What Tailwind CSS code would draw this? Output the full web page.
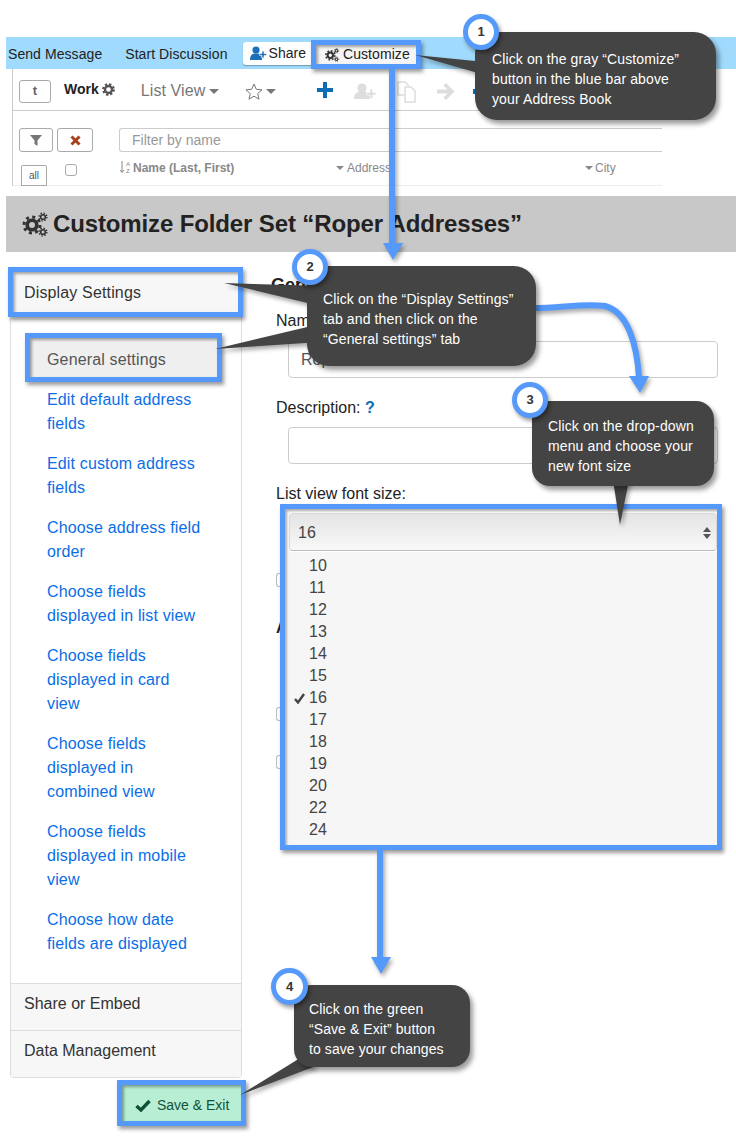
<!DOCTYPE html>
<html lang="en">
<head>
  <meta charset="UTF-8" />
  <meta name="viewport" content="width=device-width, initial-scale=1.0" />
  <title>Customize Folder Set</title>
  <script src="https://cdn.jsdelivr.net/npm/@tailwindcss/browser@4"></script>
</head>
<body class="bg-white text-[#333] font-['Liberation_Sans',Arial,sans-serif]">
  <div class="relative w-[736px] h-[1137px] overflow-hidden pt-[37px]">

    <!-- blue bar -->
    <div class="ml-[6px] h-[32px] bg-[#a0dafc] flex items-center text-[14px] text-[#222] tracking-[0.07px]">
      <span class="ml-[2px] pt-[2px]">Send Message</span>
      <span class="ml-[23px] pt-[2px]">Start Discussion</span>
      <span class="ml-[15px] w-[72px] h-[23px] bg-white rounded-[3px] flex items-center pl-[7px] gap-[2px] shadow-[0_1px_1px_rgba(0,0,0,0.3)]">
        <svg width="17" height="14" viewBox="0 0 17 14" fill="#1d6fb8"><circle cx="6" cy="4" r="3.6"/><path d="M0 14c0-5 2-6.500 6-6.500s6 1.500 6 6.500z"/><path d="M12 5h2v2.500h2.500v2H14V12h-2V9.500H9.500v-2H12z" stroke="#fff" stroke-width=".6"/></svg>
        Share
      </span>
    </div>

    <!-- address book crop -->
    <div class="ml-[12px] w-[650px] h-[117px] border-l border-[#ccc] overflow-hidden relative">
      <div class="h-[42px] border-b border-[#ccc] flex items-center pl-[6px] pt-[3px]">
        <span class="w-[32px] h-[23px] border border-[#aaa] rounded-[3px] flex items-center justify-center text-[13px] text-[#666] font-bold">t</span>
        <span class="ml-[13px] text-[14px] font-bold text-[#222] -mt-[3px]">Work</span>
        <svg class="ml-[3px] -mt-[3px]" width="13" height="13" viewBox="0 0 14 14"><circle cx="7" cy="7" r="3.800" fill="none" stroke="#555" stroke-width="2.600"/><circle cx="7" cy="7" r="5.700" fill="none" stroke="#555" stroke-width="2.400" stroke-dasharray="2.400 2.070"/></svg>
        <span class="ml-[26px] text-[16px] text-[#777] tracking-[0.1px]">List View</span>
        <span class="ml-[4px] w-0 h-0 border-x-[5px] border-x-transparent border-t-[5px] border-t-[#777]"></span>
        <svg class="ml-[26px]" width="18" height="17" viewBox="0 0 18 17" fill="none" stroke="#777"><path d="M9 1l2.300 5.300 5.700.500-4.300 3.800 1.300 5.600L9 13.200l-5 3 1.300-5.600L1 6.800l5.700-.500z"/></svg>
        <span class="ml-[3px] w-0 h-0 border-x-[5px] border-x-transparent border-t-[5px] border-t-[#777]"></span>
        <svg class="ml-[41px] -mt-[3px]" width="16" height="16" viewBox="0 0 16 16" fill="#0b6db5"><path d="M6 0h4v6h6v4h-6v6H6v-6H0V6h6z"/></svg>
        <svg class="ml-[20px]" width="24" height="17" viewBox="0 0 24 17" fill="#ddd"><circle cx="9" cy="5" r="4.500"/><path d="M1 16c0-6 3-7.500 8-7.500s8 1.500 8 7.500z"/><path d="M17 6h2.500v3.500H23v2.500h-3.500v3.500H17V12h-3.500V9.500H17z" stroke="#fff" stroke-width=".6"/></svg>
        <svg class="ml-[19px]" width="21" height="24" viewBox="0 0 21 24" fill="none" stroke="#ddd" stroke-width="1.500"><path d="M2 3h7l3 3v10H2z"/><path d="M9 8h6l4 4v11H9z" fill="#fff"/></svg>
        <svg class="ml-[19px]" width="20" height="17" viewBox="0 0 20 17" fill="#ddd"><path d="M10 0l8.500 8.500L10 17l-2.500-2.500 4-4H1v-4h10.500l-4-4z"/></svg>
        <span class="ml-[17px] w-[6px] h-[5px] bg-[#0b6db5]"></span>
      </div>
      <div class="flex pl-[6px] pt-[17px] gap-[4px]">
        <span class="w-[34px] h-[24px] border border-[#aaa] rounded-[3px] flex items-center justify-center">
          <svg width="12" height="12" viewBox="0 0 12 12" fill="#777"><path d="M0 1h12L7.500 6.500V12l-3-2V6.500z"/></svg>
        </span>
        <span class="w-[36px] h-[24px] border border-[#aaa] rounded-[3px] flex items-center justify-center">
          <svg width="11" height="11" viewBox="0 0 11 11" fill="none" stroke="#a8401c" stroke-width="3"><path d="M1.500 1.500l8 8M9.500 1.500l-8 8"/></svg>
        </span>
        <span class="ml-[22px] flex-1 h-[24px] border border-[#ccc] border-r-0 rounded-l-[3px] flex items-center pl-[12px] text-[14px] text-[#999]">Filter by name</span>
      </div>
      <div class="absolute left-0 right-0 bottom-0 h-[33px] border-b border-[#eee] text-[12px] text-[#888]">
        <span class="absolute left-[8px] top-[12px] w-[26px] h-[30px] border border-[#aaa] rounded-[2px] text-center text-[10px] text-[#555] pt-[2px] bg-white">all<span class="block mt-[2px] border-t border-[#aaa]"></span></span>
        <span class="absolute left-[52px] top-[11px] w-[12px] h-[12px] border border-[#aaa] rounded-[3px]"></span>
        <svg class="absolute left-[106px] top-[7px]" width="13" height="14" viewBox="0 0 13 14" fill="none" stroke="#888"><path d="M3 1v11M1 10l2 2.500L5 10"/><text x="7" y="6" font-size="6" fill="#888" stroke="none">A</text><text x="7" y="13" font-size="6" fill="#888" stroke="none">Z</text></svg>
        <span class="absolute left-[120px] top-[6px] font-bold">Name (Last, First)</span>
        <span class="absolute left-[323px] top-[13px] w-0 h-0 border-x-[4px] border-x-transparent border-t-[4px] border-t-[#888]"></span>
        <span class="absolute left-[334px] top-[6px]">Address</span>
        <span class="absolute left-[572px] top-[13px] w-0 h-0 border-x-[4px] border-x-transparent border-t-[4px] border-t-[#888]"></span>
        <span class="absolute left-[582px] top-[6px]">City</span>
      </div>
    </div>

    <!-- title bar -->
    <div class="ml-[6px] mt-[10px] h-[56px] bg-[#c8c8c8] flex items-center pl-[16px] text-[24px] font-bold text-[#222] gap-[5px] tracking-[-0.13px]">
      <svg width="26" height="25" viewBox="0 0 26 25"><circle cx="10" cy="13" r="4.800" fill="none" stroke="#333" stroke-width="3.600"/><circle cx="10" cy="13" r="8" fill="none" stroke="#333" stroke-width="3" stroke-dasharray="3 3.280"/><circle cx="21" cy="5" r="2.300" fill="none" stroke="#333" stroke-width="1.600"/><circle cx="21" cy="5" r="3.900" fill="none" stroke="#333" stroke-width="1.300" stroke-dasharray="1.500 1.560"/><circle cx="21" cy="20" r="2.300" fill="none" stroke="#333" stroke-width="1.600"/><circle cx="21" cy="20" r="3.900" fill="none" stroke="#333" stroke-width="1.300" stroke-dasharray="1.500 1.560"/></svg>
      <span>Customize Folder Set “Roper Addresses”</span>
    </div>

    <!-- settings -->
    <div class="flex mt-[17px] ml-[10px]">
      <div class="w-[232px] h-[809px] border border-[#ddd] rounded-[4px] flex flex-col text-[16px] overflow-hidden tracking-[0.15px]">
        <div class="h-[50px] pl-[13px] pb-[4px] flex items-center bg-[#f7f7f7] text-[#333]">Display Settings</div>
        <div class="flex-1 pt-[19px] pl-[36px] pr-[39px] leading-[24px] text-[#0a6ee6] flex flex-col gap-[16px]">
          <div class="h-[40px] -mb-[7px] flex items-center text-[#555]">General settings</div>
          <a>Edit default address fields</a>
          <a>Edit custom address fields</a>
          <a>Choose address field order</a>
          <a>Choose fields displayed in list view</a>
          <a>Choose fields displayed in card view</a>
          <a>Choose fields displayed in combined view</a>
          <a>Choose fields displayed in mobile view</a>
          <a>Choose how date fields are displayed</a>
        </div>
        <div class="h-[47px] pl-[13px] pb-[6px] flex items-center bg-[#f7f7f7] border-t border-[#ddd] tracking-normal">Share or Embed</div>
        <div class="h-[47px] pl-[13px] pb-[6px] flex items-center bg-[#f7f7f7] border-t border-[#ddd] tracking-normal">Data Management</div>
      </div>

      <div class="ml-[29px] w-[447px] text-[16px] text-[#222]">
        <h2 class="text-[18px] font-bold mt-[3px] h-[26px]">General settings</h2>
        <label class="block ml-[5px] mt-[14px] h-[18px] leading-[18px]">Name:</label>
        <div class="ml-[17px] mt-[11px] w-[430px] h-[37px] border border-[#ccc] rounded-[4px] flex items-center pl-[12px] text-[#555]">Roper Addresses</div>
        <label class="block ml-[5px] mt-[20px] h-[18px] leading-[20px]">Description: <b class="text-[#0b6db5]">?</b></label>
        <div class="ml-[17px] mt-[11px] w-[430px] h-[37px] border border-[#ccc] rounded-[4px]"></div>
        <label class="block ml-[5px] mt-[20px] h-[18px] leading-[20px]">List view font size:</label>
        <div class="ml-[18px] mt-[11px] w-[428px] h-[38px] rounded-[4px] border border-[#ddd] border-b-[#bbb] bg-linear-to-b from-[#e4e4e4] to-[#f8f8f8] flex items-center pl-[8px] pr-[5px] pt-[1px] justify-between text-[#444]">
          16
          <span class="flex flex-col gap-[2px]">
            <span class="w-0 h-0 border-x-[4px] border-x-transparent border-b-[5px] border-b-[#555]"></span>
            <span class="w-0 h-0 border-x-[4px] border-x-transparent border-t-[5px] border-t-[#555]"></span>
          </span>
        </div>
        <div class="ml-[18px] mt-[1px] w-[428px] h-[293px] bg-[#f6f6f6] rounded-b-[3px] pt-[3px] text-[#444] leading-[22px]">
          <div class="pl-[20px]">10</div>
          <div class="pl-[20px]">11</div>
          <div class="pl-[20px]">12</div>
          <div class="pl-[20px]">13</div>
          <div class="pl-[20px]">14</div>
          <div class="pl-[20px]">15</div>
          <div class="pl-[5px] flex items-center gap-[4px]">
            <svg width="11" height="11" viewBox="0 0 11 11" fill="none" stroke="#444" stroke-width="2.400"><path d="M1 6l3 3.500L10 1"/></svg>
            16
          </div>
          <div class="pl-[20px]">17</div>
          <div class="pl-[20px]">18</div>
          <div class="pl-[20px]">19</div>
          <div class="pl-[20px]">20</div>
          <div class="pl-[20px]">22</div>
          <div class="pl-[20px]">24</div>
        </div>
      </div>
    </div>

    <!-- slivers of the form that the dropdown covers -->
    <span class="absolute left-[276px] top-[573px] w-[5px] h-[14px] border border-r-0 border-[#bbb] rounded-l-[3px]"></span>
    <span class="absolute left-[276px] top-[619px] w-[5px] h-[18px] overflow-hidden text-[16px] leading-[18px] font-bold text-[#222]">A</span>
    <span class="absolute left-[276px] top-[707px] w-[5px] h-[14px] border border-r-0 border-[#bbb] rounded-l-[3px]"></span>
    <span class="absolute left-[276px] top-[755px] w-[5px] h-[14px] border border-r-0 border-[#bbb] rounded-l-[3px]"></span>

    <!-- Save & Exit button -->
    <div class="absolute left-[122px] top-[1085px] w-[119px] h-[36px] bg-[#b7eed4] flex items-center pl-[13px] pt-[4px] gap-[6px] text-[14px] text-[#14523a]">
      <svg width="16" height="13" viewBox="0 0 16 13" fill="none" stroke="#0f5136" stroke-width="3.400"><path d="M1.500 7l4.500 4L14.500 2"/></svg>
      Save &amp; Exit
    </div>

    <!-- Customize button, lies over the Share button -->
    <div class="absolute left-[316px] top-[45px] w-[100px] h-[19px] bg-[#f5f5f5] flex items-center pl-[8px] gap-[3px] text-[14px] text-[#222] tracking-[0.07px]">
      <svg width="16" height="14" viewBox="0 0 26 25"><circle cx="10" cy="13" r="4.800" fill="none" stroke="#333" stroke-width="3.600"/><circle cx="10" cy="13" r="8" fill="none" stroke="#333" stroke-width="3" stroke-dasharray="3 3.280"/><circle cx="21" cy="5" r="2.300" fill="none" stroke="#333" stroke-width="1.800"/><circle cx="21" cy="5" r="3.900" fill="none" stroke="#333" stroke-width="1.500" stroke-dasharray="1.500 1.560"/><circle cx="21" cy="20" r="2.300" fill="none" stroke="#333" stroke-width="1.800"/><circle cx="21" cy="20" r="3.900" fill="none" stroke="#333" stroke-width="1.500" stroke-dasharray="1.500 1.560"/></svg>
      Customize
    </div>

    <!-- highlight frames -->
    <div class="absolute left-[311px] top-[40px] w-[110px] h-[29px] border-[5px] border-[#5599fb] shadow-[2px_3px_4px_rgba(0,0,0,0.4),inset_2px_2px_3px_rgba(0,0,0,0.35)]"></div>
    <div class="absolute left-[8px] top-[267px] w-[235px] h-[50px] border-[5px] border-[#5599fb] shadow-[2px_3px_4px_rgba(0,0,0,0.4),inset_2px_2px_3px_rgba(0,0,0,0.35)]"></div>
    <div class="absolute left-[25px] top-[333px] w-[197px] h-[49px] border-[5px] border-[#5599fb] bg-[#efefef] flex items-center pl-[17px] pt-[4px] text-[16px] text-[#555] tracking-[0.15px] shadow-[2px_3px_4px_rgba(0,0,0,0.4),inset_2px_2px_3px_rgba(0,0,0,0.35)]">General settings</div>
    <div class="absolute left-[280px] top-[504px] w-[442px] h-[346px] border-[5px] border-[#5599fb] shadow-[2px_3px_4px_rgba(0,0,0,0.4),inset_2px_2px_3px_rgba(0,0,0,0.35)]"></div>
    <div class="absolute left-[117px] top-[1080px] w-[129px] h-[46px] border-[5px] border-[#5599fb] shadow-[2px_3px_4px_rgba(0,0,0,0.4),inset_2px_2px_3px_rgba(0,0,0,0.35)]"></div>

    <!-- arrows and callout tails -->
    <svg class="absolute left-0 top-0 drop-shadow-[2px_3px_2px_rgba(0,0,0,0.35)]" width="736" height="1137" viewBox="0 0 736 1137">
      <path d="M392 69V244" fill="none" stroke="#5599fb" stroke-width="6"/>
      <path d="M383 243h20l-10 17z" fill="#5599fb"/>
      <path d="M534 308C560 308 585 303 605 306C628 312 637 345 639 378" fill="none" stroke="#5599fb" stroke-width="6"/>
      <path d="M629 376h20l-9 17z" fill="#5599fb"/>
      <path d="M380 850V958" fill="none" stroke="#5599fb" stroke-width="6"/>
      <path d="M371 957h20l-10 17z" fill="#5599fb"/>
      <path d="M415 55L485 62V75z" fill="#444"/>
      <path d="M224 283L320 286V306z" fill="#444"/>
      <path d="M215 349L320 324V342z" fill="#444"/>
      <path d="M613 480H629L620 525z" fill="#444"/>
      <path d="M240 1095L305 1055L316 1066z" fill="#444"/>
    </svg>

    <!-- callouts -->
    <div class="absolute left-[475px] top-[32px] w-[241px] h-[88px] bg-[#444] rounded-[22px] pl-[17px] pt-[17px] text-[14px] leading-[20px] text-white tracking-[0.12px] shadow-[3px_4px_5px_rgba(0,0,0,0.4)]">Click on the gray “Customize”<br>button in the blue bar above<br>your Address Book</div>
    <div class="absolute left-[307px] top-[266px] w-[229px] h-[100px] bg-[#444] rounded-[22px] pl-[16px] pt-[23px] text-[14px] leading-[20px] text-white tracking-[0.12px] shadow-[3px_4px_5px_rgba(0,0,0,0.4)]">Click on the “Display Settings”<br>tab and then click on the<br>“General settings” tab</div>
    <div class="absolute left-[532px] top-[401px] w-[182px] h-[85px] bg-[#444] rounded-[18px] pl-[16px] pt-[15px] text-[14px] leading-[20px] text-white tracking-[0.12px] shadow-[3px_4px_5px_rgba(0,0,0,0.4)]">Click on the drop-down<br>menu and choose your<br>new font size</div>
    <div class="absolute left-[294px] top-[985px] w-[176px] h-[82px] bg-[#444] rounded-[18px] pl-[15px] pt-[14px] text-[14px] leading-[20px] text-white tracking-[0.08px] shadow-[3px_4px_5px_rgba(0,0,0,0.4)]">Click on the green<br>“Save &amp; Exit” button<br>to save your changes</div>

    <!-- step badges -->
    <div class="absolute left-[463px] top-[14px] w-[36px] h-[36px] rounded-full bg-white border-[5px] border-[#5599fb] flex items-center justify-center text-[13px] font-bold text-[#333] shadow-[2px_3px_4px_rgba(0,0,0,0.4)]">1</div>
    <div class="absolute left-[292px] top-[249px] w-[36px] h-[36px] rounded-full bg-white border-[5px] border-[#5599fb] flex items-center justify-center text-[13px] font-bold text-[#333] shadow-[2px_3px_4px_rgba(0,0,0,0.4)]">2</div>
    <div class="absolute left-[512px] top-[382px] w-[36px] h-[36px] rounded-full bg-white border-[5px] border-[#5599fb] flex items-center justify-center text-[13px] font-bold text-[#333] shadow-[2px_3px_4px_rgba(0,0,0,0.4)]">3</div>
    <div class="absolute left-[271px] top-[968px] w-[37px] h-[37px] rounded-full bg-white border-[5px] border-[#5599fb] flex items-center justify-center text-[13px] font-bold text-[#333] shadow-[2px_3px_4px_rgba(0,0,0,0.4)]">4</div>
  </div>
</body>
</html>
